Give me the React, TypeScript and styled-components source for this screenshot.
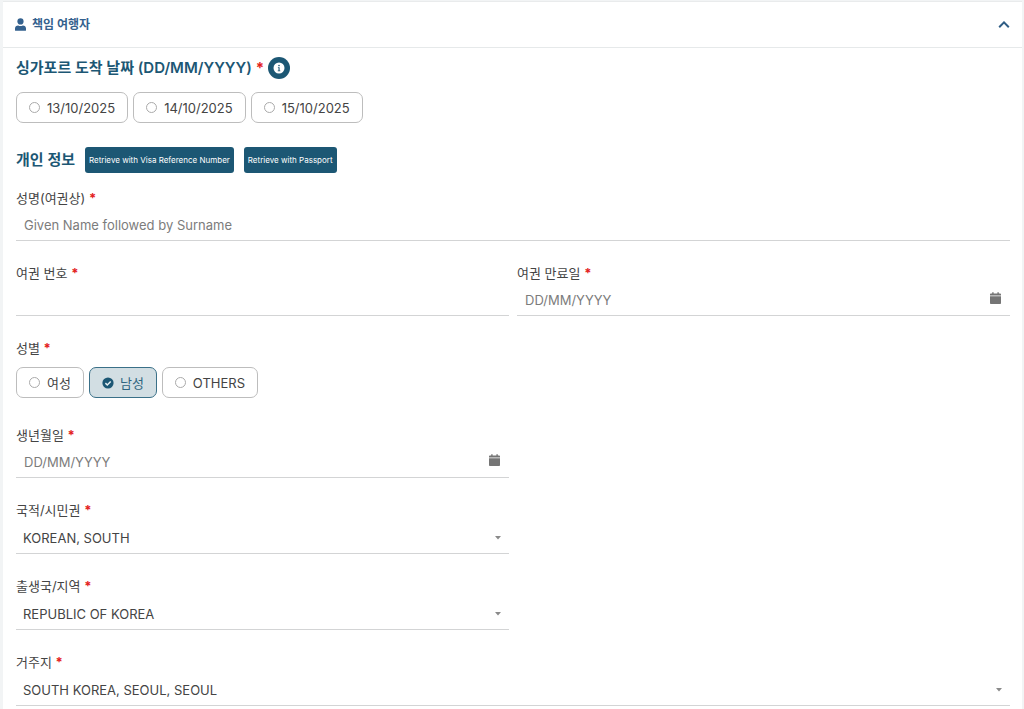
import React, { useState } from 'react';
import styled, { createGlobalStyle, css } from 'styled-components';

const GlobalStyle = createGlobalStyle`
  *, *::before, *::after { box-sizing: border-box; }
  body {
    margin: 0;
    background: #f2f4f5;
    color: #444;
    font-family: Inter, 'Noto Sans CJK KR', sans-serif;
    font-size: 13px;
    line-height: 20px;
  }
  button, input, select { font: inherit; color: inherit; }
`;

const Card = styled.section`
  margin: 1px 2px 0 3px;
  background: #fff;
  border-top: 1px solid #e9ebec;
`;

const Header = styled.button`
  display: flex;
  align-items: center;
  gap: 6px;
  width: 100%;
  height: 46px;
  padding: 0 12px;
  border: 0;
  border-bottom: 1px solid #e6e9ea;
  background: none;
  color: #34618e;
  font-size: 12px;
  font-weight: 700;
  cursor: pointer;
`;

const HeaderTitle = styled.span`
  flex: 1;
  text-align: left;
`;

const Form = styled.form`
  display: flex;
  flex-direction: column;
  padding: 7px 12px 24px 13px;
`;

const TitleRow = styled.div`
  display: flex;
  align-items: center;
  gap: 10px;
  min-height: 26px;
`;

const Title = styled.h2`
  margin: 0;
  color: #1c5774;
  font-size: 15px;
  font-weight: 600;
`;

const InfoButton = styled.button`
  display: flex;
  padding: 0;
  border: 0;
  background: none;
  margin-left: -6px;
  cursor: pointer;
`;

const FetchButton = styled.button`
  height: 26px;
  padding: 0 4px;
  border: 0;
  border-radius: 3px;
  background: #1c5774;
  color: #fff;
  font-size: 8px;
  font-weight: 400;
  white-space: nowrap;
  cursor: pointer;
`;

const Star = styled.span`
  color: #e3211c;
  font-weight: 700;
`;

const Options = styled.div`
  display: flex;
  gap: 5px;
`;

const Option = styled.label<{ $on: boolean }>`
  display: flex;
  align-items: center;
  gap: 6px;
  height: 31px;
  padding: 0 12px;
  border: 1px solid #bdbdbd;
  border-radius: 7px;
  cursor: pointer;
  ${(p) =>
    p.$on &&
    css`
      border-color: #3a7088;
      background: #d2dee3;
      color: #2d6480;
    `}
`;

const Mark = styled.span`
  display: grid;
  width: 12px;
  height: 12px;
  > * { grid-area: 1 / 1; }
`;

const Radio = styled.input`
  appearance: none;
  width: 11px;
  height: 11px;
  margin: 0;
  border: 1px solid #aaa;
  border-radius: 50%;
  &:checked { border-color: transparent; }
`;

const Grid = styled.div`
  display: grid;
  grid-template-columns: 1fr 1fr;
  column-gap: 8px;
  row-gap: 22px;
  margin-top: 15px;
`;

const Field = styled.div<{ $wide?: boolean }>`
  grid-column: ${(p) => (p.$wide ? '1 / -1' : 'auto')};
  min-width: 0;
`;

const HalfRow = styled.div`
  grid-column: 1 / -1;
  display: grid;
  grid-template-columns: 1fr 1fr;
  column-gap: 8px;
`;

const Label = styled.label`
  display: block;
  margin-bottom: 1px;
`;

const Group = styled.fieldset`
  grid-column: 1 / -1;
  margin: 0;
  padding: 0 0 5px;
  border: 0;
`;

const Legend = styled.legend`
  padding: 0;
  margin-bottom: 9px;
`;

const Control = styled.div`
  display: flex;
  align-items: center;
  height: 32px;
  padding-right: 9px;
  border-bottom: 1px solid #d3d4d5;
`;

const Input = styled.input`
  flex: 1;
  min-width: 0;
  height: 31px;
  padding: 0 8px;
  border: 0;
  outline: 0;
  background: none;
  &::placeholder { color: #7c7c7c; opacity: 1; }
`;

const SelectControl = styled(Control)`
  display: grid;
  height: 33px;
  padding: 2px 7px 0 0;
  > * { grid-area: 1 / 1; }
  > svg { justify-self: end; pointer-events: none; }
`;

const Select = styled.select`
  appearance: none;
  width: 100%;
  height: 30px;
  padding: 0 24px 0 7px;
  border: 0;
  outline: 0;
  background: none;
`;

const UserIcon = () => (
  <svg width="11" height="13" viewBox="0 0 11 13" fill="currentColor" aria-hidden="true">
    <circle cx="5.5" cy="3.4" r="3.1" />
    <path d="M0 12.2v-1.7C0 8.600 1.300 7.500 3.200 7.500c.8.400 1.500.500 2.300.500s1.500-.1 2.300-.5c1.900 0 3.200 1.100 3.200 3v1.700c0 .4-.3.600-.7.600H.7c-.4 0-.7-.2-.7-.6z" />
  </svg>
);

const ChevronUp = () => (
  <svg width="12" height="8" viewBox="0 0 12 8" fill="none" stroke="#2f5d85" strokeWidth="2" aria-hidden="true">
    <path d="M1.200 6.200 6 1.400l4.800 4.800" />
  </svg>
);

const InfoIcon = () => (
  <svg width="22" height="22" viewBox="0 0 22 22" aria-hidden="true">
    <circle cx="11" cy="11" r="11" fill="#1c5774" />
    <circle cx="11" cy="11" r="5.500" fill="#fff" />
    <circle cx="11" cy="8.600" r=".8" fill="#1c5774" />
    <path d="M9.900 10.200h1.700v3.200h.7v.8H9.700v-.8h.8V11h-.6z" fill="#1c5774" />
  </svg>
);

const CheckIcon = () => (
  <svg width="12" height="12" viewBox="0 0 12 12" aria-hidden="true">
    <circle cx="6" cy="6" r="5.600" fill="#1c5774" />
    <path d="M3.400 6.100 5.300 8l3.400-3.500" fill="none" stroke="#e6eff3" strokeWidth="1.500" />
  </svg>
);

const CalendarSvg = styled.svg`
  margin-bottom: 4px;
`;

const CalendarIcon = () => (
  <CalendarSvg width="11" height="12" viewBox="0 0 11 12" fill="#757575" aria-hidden="true">
    <path d="M2.200.3h1.400v1.300h3.800V.3h1.400v1.300h1.100c.6 0 1.100.4 1.100 1v1H0v-1c0-.6.500-1 1.100-1h1.100z" />
    <path d="M0 4.200h11v6.700c0 .6-.5 1-1.100 1H1.100c-.6 0-1.100-.4-1.100-1z" />
  </CalendarSvg>
);

const CaretIcon = () => (
  <svg width="8" height="4" viewBox="0 0 8 4" fill="#8a8a8a" aria-hidden="true">
    <path d="M1 0h6L4 3.500z" />
  </svg>
);

const Required = () => <Star aria-hidden="true">*</Star>;

type ChoiceProps = { name: string; items: string[]; value: string; onChange: (v: string) => void };

const Choices = ({ name, items, value, onChange }: ChoiceProps) => (
  <Options>
    {items.map((item) => (
      <Option key={item} $on={item === value}>
        <Mark>
          <Radio type="radio" name={name} checked={item === value} onChange={() => onChange(item)} />
          {item === value && <CheckIcon />}
        </Mark>
        {item}
      </Option>
    ))}
  </Options>
);

type TextFieldProps = { id: string; label: string; placeholder?: string; date?: boolean; wide?: boolean };

const TextField = ({ id, label, placeholder, date, wide }: TextFieldProps) => (
  <Field $wide={wide}>
    <Label htmlFor={id}>{label} <Required /></Label>
    <Control>
      <Input id={id} type="text" placeholder={placeholder} />
      {date && <CalendarIcon />}
    </Control>
  </Field>
);

const SelectField = ({ id, label, value, wide }: { id: string; label: string; value: string; wide?: boolean }) => (
  <Field $wide={wide}>
    <Label htmlFor={id}>{label} <Required /></Label>
    <SelectControl>
      <Select id={id} defaultValue={value}>
        <option>{value}</option>
      </Select>
      <CaretIcon />
    </SelectControl>
  </Field>
);

const SectionHead = styled(TitleRow)`
  margin-top: 24px;
`;

const Dates = styled.div`
  margin-top: 11px;
`;

export default function App() {
  const [arrival, setArrival] = useState('');
  const [sex, setSex] = useState('남성');
  return (
    <>
      <GlobalStyle />
      <Card>
        <Header type="button" aria-expanded="true">
          <UserIcon />
          <HeaderTitle>책임 여행자</HeaderTitle>
          <ChevronUp />
        </Header>
        <Form>
          <TitleRow>
            <Title>싱가포르 도착 날짜 (DD/MM/YYYY) <Required /></Title>
            <InfoButton type="button" aria-label="도착 날짜 안내"><InfoIcon /></InfoButton>
          </TitleRow>
          <Dates>
            <Choices name="arrival" items={['13/10/2025', '14/10/2025', '15/10/2025']} value={arrival} onChange={setArrival} />
          </Dates>
          <SectionHead>
            <Title>개인 정보</Title>
            <FetchButton type="button">Retrieve with Visa Reference Number</FetchButton>
            <FetchButton type="button">Retrieve with Passport</FetchButton>
          </SectionHead>
          <Grid>
            <TextField id="name" label="성명(여권상)" placeholder="Given Name followed by Surname" wide />
            <TextField id="passport" label="여권 번호" />
            <TextField id="expiry" label="여권 만료일" placeholder="DD/MM/YYYY" date />
            <Group>
              <Legend>성별 <Required /></Legend>
              <Choices name="sex" items={['여성', '남성', 'OTHERS']} value={sex} onChange={setSex} />
            </Group>
            <HalfRow><TextField id="birth" label="생년월일" placeholder="DD/MM/YYYY" date /></HalfRow>
            <HalfRow><SelectField id="nationality" label="국적/시민권" value="KOREAN, SOUTH" /></HalfRow>
            <HalfRow><SelectField id="birthplace" label="출생국/지역" value="REPUBLIC OF KOREA" /></HalfRow>
            <SelectField id="residence" label="거주지" value="SOUTH KOREA, SEOUL, SEOUL" wide />
          </Grid>
        </Form>
      </Card>
    </>
  );
}
